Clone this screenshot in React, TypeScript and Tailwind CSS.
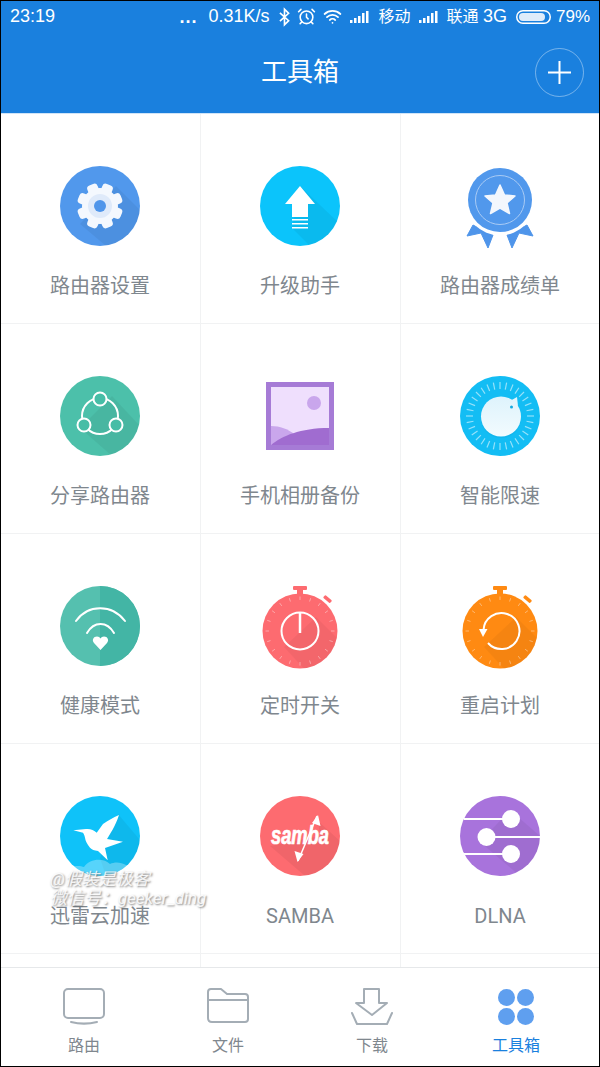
import React from "react";
import { AlarmClock, Wifi } from "lucide-react";

const range = (n: number) => Array.from({ length: n }, (_, i) => i);

function Ticks({ cx, cy, r1, r2, n, width = 1, opacity = 0.4 }: { cx: number; cy: number; r1: number; r2: number; n: number; width?: number; opacity?: number }) {
    return (
        <g stroke="#fff" strokeWidth={width} opacity={opacity}>
            {range(n).map((i) => {
                const a = (i * Math.PI * 2) / n;
                return <line key={i} x1={cx + r1 * Math.sin(a)} y1={cy - r1 * Math.cos(a)} x2={cx + r2 * Math.sin(a)} y2={cy - r2 * Math.cos(a)} />;
            })}
        </g>
    );
}

function Disc({ id, fill, shadow, children }: { id: string; fill: string; shadow?: string; children: React.ReactNode }) {
    return (
        <svg width="80" height="80" viewBox="0 0 80 80">
            <clipPath id={id}>
                <circle cx="40" cy="40" r="40" />
            </clipPath>
            <circle cx="40" cy="40" r="40" fill={fill} />
            {shadow && <polygon points={shadow} fill="#000" opacity="0.05" clipPath={`url(#${id})`} />}
            {children}
        </svg>
    );
}

function GearIcon() {
    return (
        <Disc id="gear" fill="#5198ec" shadow="56,20 80,44 80,80 46,80 20,58">
            <g fill="#f4f8fe">
                {range(8).map((i) => (
                    <rect key={i} x="34.500" y="17" width="11" height="12" rx="3.500" transform={`rotate(${i * 45 + 22.5} 40 40)`} />
                ))}
                <circle cx="40" cy="40" r="18" />
            </g>
            <circle cx="40" cy="40" r="12" fill="#dfeafa" />
            <circle cx="40" cy="40" r="6" fill="#4f95ea" />
        </Disc>
    );
}

function UpgradeIcon() {
    return (
        <Disc id="upgrade" fill="#0bc4fb" shadow="40,20 80,58 80,80 50,80 32,62">
            <path d="M40 20 L55 38 L48 38 L48 51 L32 51 L32 38 L25 38 Z" fill="#fff" />
            <path d="M32 53h16v1.500H32zM32 57h16v1.500H32zM32 61h16v1.500H32z" fill="#fff" />
        </Disc>
    );
}

function MedalIcon() {
    return (
        <svg width="80" height="80" viewBox="0 0 80 80" className="overflow-visible">
            <g fill="#4f95ea" stroke="#4f95ea" strokeLinejoin="round">
                <path d="M13 59 L7 70 L21 67 L28 82 L33 69 Z" />
                <path d="M67 59 L73 70 L59 67 L52 82 L47 69 Z" />
            </g>
            <circle cx="40" cy="34" r="35.500" fill="#fff" />
            <circle cx="40" cy="34" r="32" fill="#5198ec" />
            <circle cx="40" cy="34" r="24.500" fill="none" stroke="#a9cbf5" strokeWidth="1" />
            <path d="M40 19 L44.500 29 L55 30 L47 37 L49.500 47.500 L40 42 L30.500 47.500 L33 37 L25 30 L35.500 29 Z" fill="#f3f7fd" stroke="#f3f7fd" strokeWidth="1.500" strokeLinejoin="round" />
        </svg>
    );
}

function ShareIcon() {
    return (
        <Disc id="share" fill="#4cc0aa" shadow="52,20 80,50 80,80 52,80 20,52">
            <g fill="#47bda6" stroke="#fff" strokeWidth="2">
                <circle cx="40" cy="40" r="18" fill="none" />
                <circle cx="40" cy="23" r="6.500" />
                <circle cx="24" cy="49" r="6.500" />
                <circle cx="56" cy="49" r="6.500" />
            </g>
        </Disc>
    );
}

function PhotoIcon() {
    return (
        <svg width="80" height="80" viewBox="0 0 80 80">
            <rect x="6" y="6" width="68" height="68" fill="#a67bd6" />
            <rect x="11" y="11" width="58" height="58" fill="#efdffd" />
            <circle cx="54" cy="27" r="7" fill="#c9a6ec" />
            <path d="M11 50 C20 50 28 53 34 58 L11 69 Z" fill="#c9a6ec" />
            <path d="M11 69 C22 60 40 52 69 52 L69 69 Z" fill="#a06cd0" />
        </svg>
    );
}

function SpeedIcon() {
    return (
        <Disc id="speed" fill="#13bdf4">
            <Ticks cx={40} cy={40} r1={27} r2={34} n={32} width={1.2} opacity={0.55} />
            <circle cx="41" cy="42" r="20" fill="#0ea8e0" opacity="0.35" />
            <path d="M58 30 L57 21 L50 25 Z" fill="#e2f5fc" />
            <linearGradient id="knob" x1="0" y1="0" x2="0" y2="1">
                <stop offset="0" stopColor="#def3fc" />
                <stop offset="1" stopColor="#f2fbfe" />
            </linearGradient>
            <circle cx="41" cy="40.500" r="20" fill="url(#knob)" />
            <circle cx="51.500" cy="31" r="1.500" fill="#13a9e0" />
        </Disc>
    );
}

function HealthIcon() {
    return (
        <svg width="80" height="80" viewBox="0 0 80 80">
            <circle cx="40" cy="40" r="40" fill="#55c0af" />
            <path d="M40 0 A40 40 0 0 1 40 80 Z" fill="#43b5a5" />
            <g fill="none" stroke="#fff" strokeWidth="2" strokeLinecap="round">
                <path d="M16 35 C28 18 52 18 65 35" />
                <path d="M27 47 C34 35 47 35 54 47" />
            </g>
            <path d="M40.500 64 L34 57 C31.500 54 33.500 50.500 37 50.500 C38.500 50.500 39.800 51.300 40.500 52.500 C41.200 51.300 42.500 50.500 44 50.500 C47.500 50.500 49.500 54 47 57 Z" fill="#fff" />
        </svg>
    );
}

function Stopwatch({ id, fill, children }: { id: string; fill: string; children: React.ReactNode }) {
    return (
        <svg width="80" height="80" viewBox="0 0 80 80" className="overflow-visible">
            <clipPath id={id}>
                <circle cx="40" cy="45" r="37.500" />
            </clipPath>
            <rect x="33" y="0" width="14" height="4" rx="1" fill={fill} />
            <rect x="37" y="3" width="6" height="6" fill={fill} />
            <rect x="63" y="11" width="9" height="3.500" rx="1" fill={fill} transform="rotate(40 67 13)" />
            <circle cx="40" cy="45" r="37.500" fill={fill} />
            <polygon points="56,31 80,55 80,85 46,85 24,61" fill="#000" opacity="0.04" clipPath={`url(#${id})`} />
            <Ticks cx={40} cy={45} r1={31} r2={34.500} n={20} />
            {children}
        </svg>
    );
}

function TimerIcon() {
    return (
        <Stopwatch id="timer" fill="#fd6b70">
            <circle cx="40" cy="45" r="18.500" fill="none" stroke="#fff" strokeWidth="2" />
            <line x1="40" y1="27" x2="40" y2="47" stroke="#fff" strokeWidth="2.500" />
        </Stopwatch>
    );
}

function RestartIcon() {
    return (
        <Stopwatch id="restart" fill="#ff8a12">
            <path d="M23.500 44 A18 18 0 1 1 28 57" fill="none" stroke="#fff" strokeWidth="2" />
            <path d="M19 43 L27.500 43 L23 51 Z" fill="#fff" />
        </Stopwatch>
    );
}

function BirdIcon() {
    return (
        <Disc id="bird" fill="#0fc2f9" shadow="58,18 80,44 80,80 46,80 40,62">
            <path d="M6 76 C12 68 20 70 24 71 C30 62 44 62 50 68 C58 64 68 68 74 76 L74 80 L6 80 Z" fill="#fff" opacity="0.3" clipPath="url(#bird)" />
            <path d="M13.300 34.300 L26 33 C30 32.500 34 34 36.700 36.700 L43 28 C48 24.500 53 21.500 59 19 C57 25 55 29 53 33 L47 43 L63 45.700 L45 52 L47.700 64.300 L38 55 C34 54.500 32 53.500 30 51.700 C27 48 25.500 45 25 41.700 C24.500 39 23.500 37.500 23 36.700 Z" fill="#fff" />
        </Disc>
    );
}

function SambaIcon() {
    return (
        <Disc id="samba" fill="#fd6b70" shadow="58,25 80,45 80,80 45,80 10,50 60,40">
            <path d="M57 20 L38 65" stroke="#fff" strokeWidth="1.500" />
            <path d="M58 19 L60.500 30 L52 27 Z M37.500 66 L34.500 55 L43.500 58 Z" fill="#fff" />
            <text x="40" y="48" textAnchor="middle" fill="#fff" stroke="#fff" strokeWidth="0.7" fontFamily="'Liberation Sans', sans-serif" fontSize="25" fontWeight="700" fontStyle="italic" textLength="58" lengthAdjust="spacingAndGlyphs">samba</text>
        </Disc>
    );
}

function DlnaIcon() {
    return (
        <Disc id="dlna" fill="#a873dc" shadow="50,14 80,40 80,80 60,80 20,46">
            <g stroke="#fff" strokeWidth="2">
                <line x1="4" y1="23" x2="50" y2="23" />
                <line x1="26" y1="41" x2="80" y2="41" />
                <line x1="4" y1="58" x2="50" y2="58" />
            </g>
            <g fill="#fff">
                <circle cx="51" cy="23" r="9" />
                <circle cx="26.500" cy="41" r="9" />
                <circle cx="51" cy="58" r="9" />
            </g>
        </Disc>
    );
}

function Signal() {
    return (
        <svg width="20" height="14" viewBox="0 0 20 14" fill="#fff">
            <rect x="0" y="10" width="2.500" height="3" />
            <rect x="4" y="8" width="2.500" height="5" />
            <rect x="8" y="6" width="2.500" height="7" />
            <rect x="12" y="3" width="2.500" height="10" />
            <rect x="16" y="1" width="2.500" height="12" />
        </svg>
    );
}

const tools = [
    { name: "路由器设置", icon: <GearIcon /> },
    { name: "升级助手", icon: <UpgradeIcon /> },
    { name: "路由器成绩单", icon: <MedalIcon /> },
    { name: "分享路由器", icon: <ShareIcon /> },
    { name: "手机相册备份", icon: <PhotoIcon /> },
    { name: "智能限速", icon: <SpeedIcon /> },
    { name: "健康模式", icon: <HealthIcon /> },
    { name: "定时开关", icon: <TimerIcon /> },
    { name: "重启计划", icon: <RestartIcon /> },
    { name: "迅雷云加速", icon: <BirdIcon /> },
    { name: "SAMBA", icon: <SambaIcon /> },
    { name: "DLNA", icon: <DlnaIcon /> },
];

const tabs = [
    {
        name: "路由",
        icon: (
            <svg width="42" height="38" viewBox="0 0 42 38" fill="none" stroke="#a4adb5" strokeWidth="2">
                <rect x="1" y="1" width="40" height="29" rx="4" />
                <path d="M8 34 C16 36 26 36 34 34" strokeLinecap="round" />
            </svg>
        ),
    },
    {
        name: "文件",
        icon: (
            <svg width="42" height="38" viewBox="0 0 42 38" fill="none" stroke="#a4adb5" strokeWidth="2">
                <path d="M1 30 V4 C1 2 2 1 4 1 H14 L20 6 H38 C40 6 41 7 41 9 V31 C41 33 40 34 38 34 H5 C2 34 1 33 1 30 Z" strokeLinejoin="round" />
                <path d="M1 12 H41" />
            </svg>
        ),
    },
    {
        name: "下载",
        icon: (
            <svg width="42" height="38" viewBox="0 0 42 38" fill="none" stroke="#a4adb5" strokeWidth="2" strokeLinejoin="round">
                <path d="M13 1 H28 V15 H36 L21 27 L5 15 H13 Z" />
                <path d="M1 25 L6 36 H36 L41 25" strokeLinecap="round" />
            </svg>
        ),
    },
    {
        name: "工具箱",
        active: true,
        icon: (
            <svg width="42" height="38" viewBox="0 0 42 38" fill="#5f9fef">
                <circle cx="11.500" cy="9.500" r="8.500" />
                <circle cx="30.500" cy="9.500" r="8.500" />
                <circle cx="11.500" cy="28.500" r="8.500" />
                <circle cx="30.500" cy="28.500" r="8.500" />
            </svg>
        ),
    },
];

export default function App() {
    return (
        <div className="relative flex h-[1067px] w-[600px] flex-col overflow-hidden border border-black bg-white font-['Roboto','Noto_Sans_CJK_SC',sans-serif]">
            <div className="h-[112px] shrink-0 bg-[#1a80de] text-white">
                <div className="flex h-[31px] items-center justify-between px-[9px] font-['Liberation_Sans','Noto_Sans_CJK_SC',sans-serif] text-[18px]">
                    <span>23:19</span>
                    <div className="flex items-center gap-[8px]">
                        <span className="mr-[3px] text-[18px] font-bold leading-none tracking-[1px]">...</span>
                        <span>0.31K/s</span>
                        <svg width="11" height="20" viewBox="0 0 12 20" fill="none" stroke="#fff" strokeWidth="1.800" className="ml-[2px]">
                            <path d="M1 5.500 L10.500 14 L6 18.500 V1.500 L10.500 6 L1 14.500" />
                        </svg>
                        <AlarmClock size={19} className="-ml-[1px]" />
                        <Wifi size={19} strokeWidth={2.2} className="-ml-[1px]" />
                        <Signal />
                        <span className="text-[16px]">移动</span>
                        <Signal />
                        <span className="text-[16px]">联通 <span className="text-[18px]">3G</span></span>
                        <svg width="35" height="14" viewBox="0 0 35 14" className="ml-[1px]">
                            <rect x="0.750" y="0.750" width="33.500" height="12.500" rx="6.200" fill="none" stroke="#fff" strokeWidth="1.500" />
                            <rect x="3" y="3" width="26" height="8" rx="4" fill="#dfecfa" />
                        </svg>
                        <span className="-ml-[3px] text-[17px]">79%</span>
                    </div>
                </div>
                <div className="relative flex h-[81px] items-center justify-center pb-[1px]">
                    <h1 className="text-[26px] font-normal">工具箱</h1>
                    <div className="absolute right-[15px] top-[16px] flex h-[49px] w-[49px] items-center justify-center rounded-full border border-white/40">
                        <svg width="23" height="23" viewBox="0 0 23 23" stroke="#fff" strokeWidth="2">
                            <path d="M11.500 0 V23 M0 11.500 H23" />
                        </svg>
                    </div>
                </div>
            </div>

            <div className="min-h-0 flex-1 overflow-hidden border-t border-[#cfe4f8]">
                <div className="grid grid-cols-[200px_200px_198px]">
                    {tools.map((tool, i) => (
                        <div key={i} className="flex h-[210px] flex-col items-center border-b border-r border-[#f1f2f3] pr-[1px] pt-[52px] [&:nth-child(3n)]:border-r-0 [&:nth-child(3n)]:pr-0">
                            {tool.icon}
                            <span className="mt-[26px] text-[20px] leading-[28px] text-[#7f878e]">{tool.name}</span>
                        </div>
                    ))}
                    {range(3).map((i) => (
                        <div key={i} className="h-[14px] border-r border-[#f1f2f3] [&:nth-child(3n)]:border-r-0" />
                    ))}
                </div>
            </div>

            <div className="grid h-[99px] shrink-0 grid-cols-4 border-t border-[#e6e8ea] px-[11px] pt-[20px]">
                {tabs.map((tab) => (
                    <div key={tab.name} className="flex flex-col items-center">
                        {tab.icon}
                        <span className={`mt-[9px] text-[16px] leading-[22px] ${tab.active ? "text-[#1a80de]" : "text-[#7f878e]"}`}>{tab.name}</span>
                    </div>
                ))}
            </div>

            {/* watermark over the last row */}
            <div className="absolute left-[49px] top-[869px] text-[17px] italic leading-[19px] text-white/85 [text-shadow:1px_1px_2px_rgba(0,0,0,0.5)]">
                <div>@假装是极客</div>
                <div>微信号：geeker_ding</div>
            </div>
        </div>
    );
}
